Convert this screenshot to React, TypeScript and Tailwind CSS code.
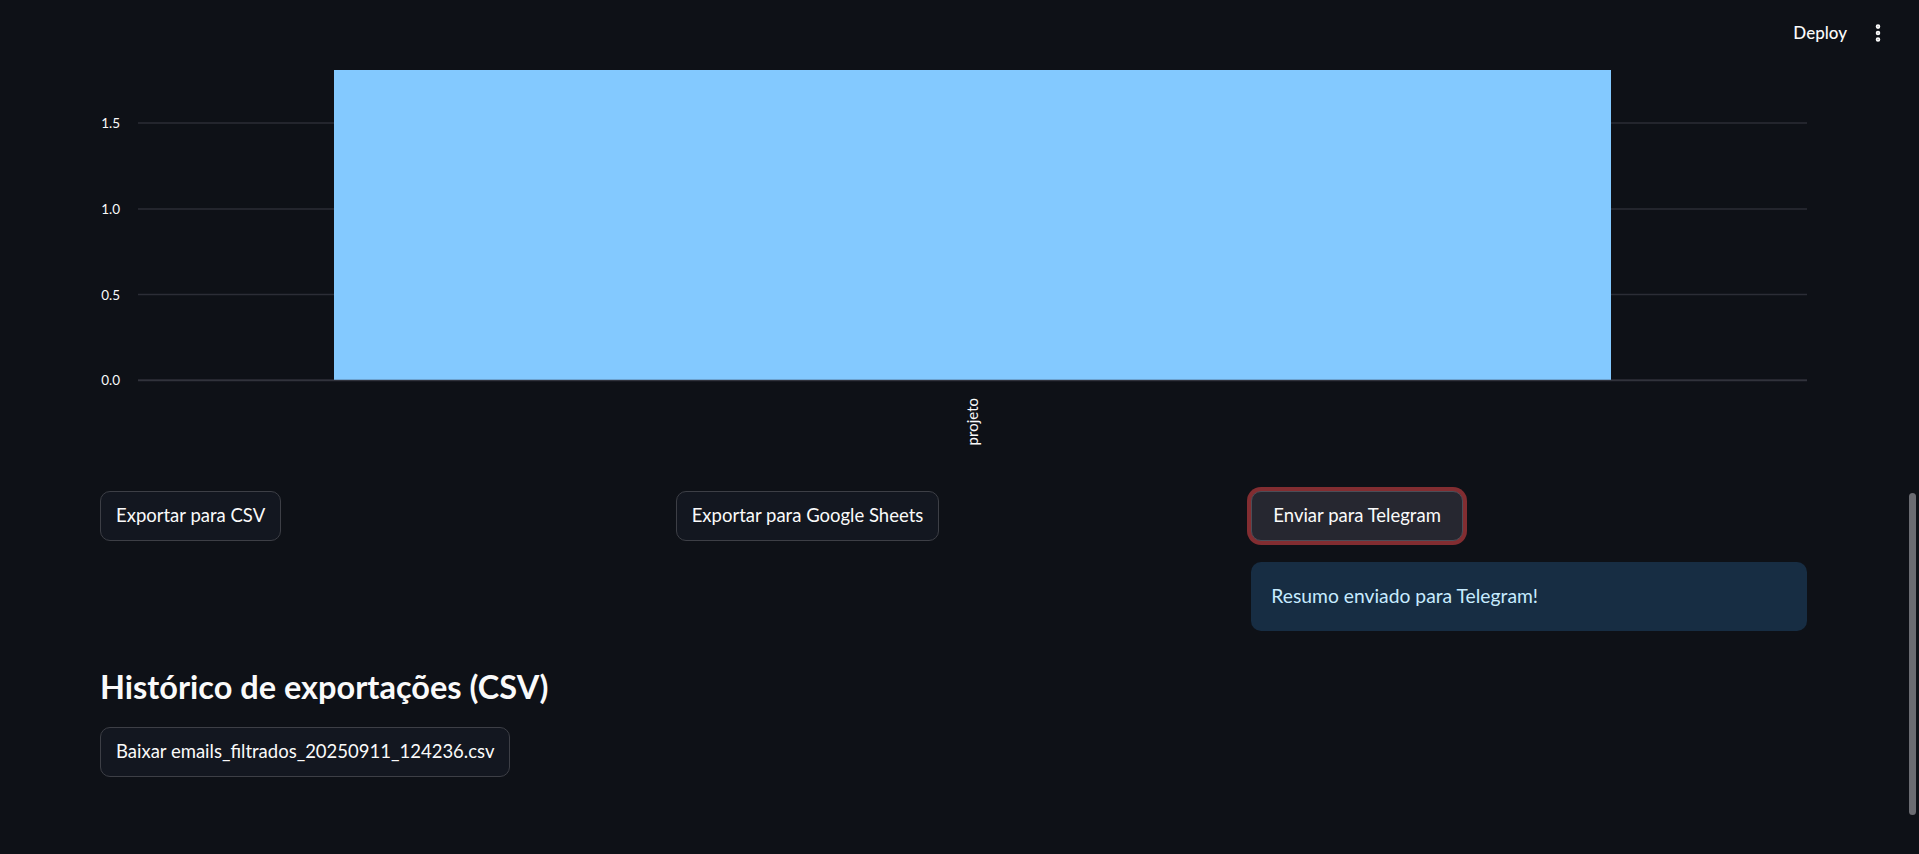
import { EllipsisVertical } from "lucide-react";

const ticks = [
  { label: "1.5", y: 63 },
  { label: "1.0", y: 149 },
  { label: "0.5", y: 234.5 },
  { label: "0.0", y: 320 },
];

function Chart() {
  return (
    <svg width="1707" height="400" className="block" style={{ fontFamily: "Lato, sans-serif" }}>
      {ticks.map((t) => (
        <g key={t.label}>
          <line x1="38" x2="1707" y1={t.y} y2={t.y} stroke="#2b2d36" strokeWidth="1.5" />
          <text x="20" y={t.y + 5} textAnchor="end" fontSize="13.5" fill="#fafafa">
            {t.label}
          </text>
        </g>
      ))}
      <rect x="234" y="10" width="1277" height="310" fill="#83c9ff" />
      <line x1="38" x2="1707" y1="320.5" y2="320.5" stroke="#31333c" strokeWidth="1.5" />
      <text
        x="874"
        y="338"
        textAnchor="end"
        fontSize="15"
        fill="#fafafa"
        transform="rotate(-90 874 338)"
        dominantBaseline="middle"
      >
        projeto
      </text>
    </svg>
  );
}

function Button({ children, active }: { children: React.ReactNode; active?: boolean }) {
  return (
    <button
      className={
        active
          ? "h-[50px] px-[21px] rounded-[10px] border border-[#4c4d57] bg-[#262730] text-[#fafafa] text-[18.5px] ring-4 ring-[#822d31]"
          : "h-[50px] px-[15px] rounded-[10px] border border-[#3d3f46] bg-[#131720] text-[#fafafa] text-[18.5px]"
      }
    >
      {children}
    </button>
  );
}

export default function App() {
  return (
    <div
      className="relative h-[854px] w-full overflow-hidden bg-[#0e1117] text-[#fafafa]"
      style={{ fontFamily: "Lato, 'Liberation Sans', sans-serif" }}
    >
      <header className="absolute right-0 top-0 flex h-[66px] items-center gap-[20px] pr-[30px]">
        <span className="text-[17px] font-medium">Deploy</span>
        <EllipsisVertical size={22} strokeWidth={3} className="text-[#fafafa]" />
      </header>

      <main className="ml-[100px] w-[1707px] pt-[60px]">
        <Chart />

        <div className="mt-[31px] grid grid-cols-3 gap-x-[20px]">
          <div>
            <Button>Exportar para CSV</Button>
          </div>
          <div>
            <Button>Exportar para Google Sheets</Button>
          </div>
          <div className="flex flex-col items-start">
            <Button active>Enviar para Telegram</Button>
            <div className="mt-[21px] flex h-[69px] w-full items-center rounded-[10px] bg-[#172d43] px-[20px] text-[19.3px] text-[#c7ebff]">
              Resumo enviado para Telegram!
            </div>
          </div>
        </div>

        <h3 className="mt-[32px] text-[32.5px] font-bold leading-[48px]">Histórico de exportações (CSV)</h3>

        <div className="mt-[16px]">
          <Button>Baixar emails_filtrados_20250911_124236.csv</Button>
        </div>
      </main>

      <div className="absolute right-[3px] top-[493px] h-[322px] w-[7px] rounded-full bg-[#6b6c72]" />
    </div>
  );
}
